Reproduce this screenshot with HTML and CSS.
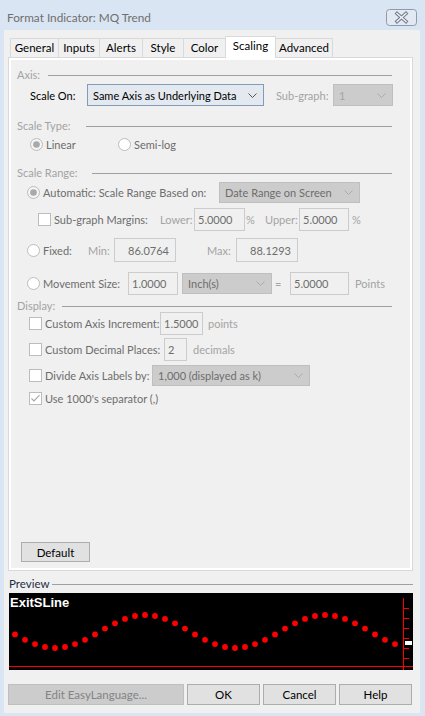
FILE: index.html
```html
<!DOCTYPE html>
<html>
<head>
<meta charset="utf-8">
<title>Format Indicator: MQ Trend</title>
<link rel="stylesheet" href="styles.css">
</head>
<body>
<div class="window">
  <div class="titlebar">
    <span class="title">Format Indicator: MQ Trend</span>
    <svg class="close" width="31" height="17" viewBox="0 0 31 17">
      <rect x="0.5" y="0.5" width="30" height="16" rx="3" fill="#e2e9f3" stroke="#8e99ab"/>
      <path d="M11 4.5 L20 12.5 M20 4.5 L11 12.5" stroke="#6f7b8d" stroke-width="3.4" stroke-linecap="square"/>
      <path d="M11 4.5 L20 12.5 M20 4.5 L11 12.5" stroke="#f4f6f9" stroke-width="1.4" stroke-linecap="square"/>
    </svg>
  </div>
  <div class="client">
    <div class="tabs">
      <div class="tab w49">General</div>
      <div class="tab w42">Inputs</div>
      <div class="tab w44">Alerts</div>
      <div class="tab w42">Style</div>
      <div class="tab w43">Color</div>
      <div class="tab active w51">Scaling</div>
      <div class="tab w58">Advanced</div>
    </div>
    <div class="panel">
      <div class="page">
        <div class="row hdr"><span class="hlabel w31">Axis:</span><span class="hline"></span></div>

        <div class="row h22 mt3">
          <span class="lbl blk ml13 w57">Scale On:</span>
          <div class="combo focus w177 h22"><span>Same Axis as Underlying Data</span><svg class="chev" width="9" height="5" viewBox="0 0 9 5"><path d="M0.5 0.5 L4.5 4.5 L8.5 0.5" fill="none" stroke="#555"/></svg></div>
          <span class="lbl lt ml12 w57">Sub-graph:</span>
          <div class="combo dis w60 h22"><span class="lt">1</span><svg class="chev" width="9" height="5" viewBox="0 0 9 5"><path d="M0.5 0.5 L4.5 4.5 L8.5 0.5" fill="none" stroke="#ababab"/></svg></div>
        </div>

        <div class="row hdr mt12"><span class="hlabel w69">Scale Type:</span><span class="hline"></span></div>

        <div class="row h14 mt5">
          <div class="opt ml13 w88">
            <svg class="rb" width="13" height="13" viewBox="0 0 13 13"><circle cx="6.5" cy="6.5" r="6" fill="#f4f4f4" stroke="#bcbcbc"/><circle cx="6.5" cy="6.5" r="3.3" fill="#a9a9a9"/></svg>
            <span class="mid">Linear</span>
          </div>
          <div class="opt">
            <svg class="rb" width="13" height="13" viewBox="0 0 13 13"><circle cx="6.5" cy="6.5" r="6" fill="#fff" stroke="#bcbcbc"/></svg>
            <span class="mid">Semi-log</span>
          </div>
        </div>

        <div class="row hdr mt14"><span class="hlabel w75">Scale Range:</span><span class="hline"></span></div>

        <div class="row h21 mt3">
          <div class="opt ml10 w192">
            <svg class="rb" width="13" height="13" viewBox="0 0 13 13"><circle cx="6.5" cy="6.5" r="6" fill="#f4f4f4" stroke="#bcbcbc"/><circle cx="6.5" cy="6.5" r="3.3" fill="#a9a9a9"/></svg>
            <span class="mid">Automatic: Scale Range Based on:</span>
          </div>
          <div class="combo dis w141 h21"><span>Date Range on Screen</span><svg class="chev" width="9" height="5" viewBox="0 0 9 5"><path d="M0.5 0.5 L4.5 4.5 L8.5 0.5" fill="none" stroke="#ababab"/></svg></div>
        </div>

        <div class="row h24 mt4">
          <div class="opt ml21 w122">
            <svg class="cb" width="13" height="13" viewBox="0 0 13 13"><rect x="0.5" y="0.5" width="12" height="12" fill="#fff" stroke="#bcbcbc"/></svg>
            <span class="mid">Sub-graph Margins:</span>
          </div>
          <span class="lbl lt w34">Lower:</span>
          <div class="edit w51 h23">5.0000</div>
          <span class="lbl lt pl1 w20">%</span>
          <span class="lbl lt w34">Upper:</span>
          <div class="edit w50 h23">5.0000</div>
          <span class="lbl lt pl3">%</span>
        </div>

        <div class="row h24 mt7">
          <div class="opt ml10 w61">
            <svg class="rb" width="13" height="13" viewBox="0 0 13 13"><circle cx="6.5" cy="6.5" r="6" fill="#fff" stroke="#bcbcbc"/></svg>
            <span class="mid">Fixed:</span>
          </div>
          <span class="lbl lt w26">Min:</span>
          <div class="edit right w62 h24">86.0764</div>
          <span class="lbl lt ml31 w29">Max:</span>
          <div class="edit right w62 h24">88.1293</div>
        </div>

        <div class="row h24 mt9">
          <div class="opt ml10 w101">
            <svg class="rb" width="13" height="13" viewBox="0 0 13 13"><circle cx="6.5" cy="6.5" r="6" fill="#fff" stroke="#bcbcbc"/></svg>
            <span class="mid">Movement Size:</span>
          </div>
          <div class="edit w50 h23">1.0000</div>
          <div class="combo dis ml4 w90 h21"><span>Inch(s)</span><svg class="chev" width="9" height="5" viewBox="0 0 9 5"><path d="M0.5 0.5 L4.5 4.5 L8.5 0.5" fill="none" stroke="#ababab"/></svg></div>
          <span class="lbl lt ml3 w15">=</span>
          <div class="edit w59 h23">5.0000</div>
          <span class="lbl lt ml6">Points</span>
        </div>

        <div class="row hdr mt3"><span class="hlabel w45">Display:</span><span class="hline"></span></div>

        <div class="row h23">
          <div class="opt ml12 w131">
            <svg class="cb" width="13" height="13" viewBox="0 0 13 13"><rect x="0.5" y="0.5" width="12" height="12" fill="#fff" stroke="#bcbcbc"/></svg>
            <span class="mid">Custom Axis Increment:</span>
          </div>
          <div class="edit w43 h23">1.5000</div>
          <span class="lbl lt ml5">points</span>
        </div>

        <div class="row h23 mt3">
          <div class="opt ml12 w135">
            <svg class="cb" width="13" height="13" viewBox="0 0 13 13"><rect x="0.5" y="0.5" width="12" height="12" fill="#fff" stroke="#bcbcbc"/></svg>
            <span class="mid">Custom Decimal Places:</span>
          </div>
          <div class="edit w23 h23">2</div>
          <span class="lbl lt ml6">decimals</span>
        </div>

        <div class="row h21 mt4">
          <div class="opt ml12 w123">
            <svg class="cb" width="13" height="13" viewBox="0 0 13 13"><rect x="0.5" y="0.5" width="12" height="12" fill="#fff" stroke="#bcbcbc"/></svg>
            <span class="mid">Divide Axis Labels by:</span>
          </div>
          <div class="combo dis w158 h21"><span>1,000 (displayed as k)</span><svg class="chev" width="9" height="5" viewBox="0 0 9 5"><path d="M0.5 0.5 L4.5 4.5 L8.5 0.5" fill="none" stroke="#ababab"/></svg></div>
        </div>

        <div class="row h14 mt5">
          <div class="opt ml12">
            <svg class="cb" width="13" height="13" viewBox="0 0 13 13"><rect x="0.5" y="0.5" width="12" height="12" fill="#fff" stroke="#bcbcbc"/><path d="M2.5 6.5 L5 9 L10.5 3.2" fill="none" stroke="#a6a6a6" stroke-width="1.1"/></svg>
            <span class="mid">Use 1000's separator (,)</span>
          </div>
        </div>

        <div class="row mt137">
          <div class="btn ml4 w69 h20">Default</div>
        </div>
      </div>
    </div>

    <div class="prevhead"><span class="prevlabel">Preview</span><span class="hline"></span></div>
    <div class="preview">
      <svg width="404" height="77" viewBox="0 0 404 77">
        <rect x="0" y="0" width="404" height="77" fill="#000"/>
        <text x="1" y="13.5" class="plabel">ExitSLine</text>
        <g fill="#ff0000">
          <circle cx="6" cy="41.4" r="2.9"/><circle cx="16" cy="46.8" r="2.9"/><circle cx="26" cy="51.1" r="2.9"/><circle cx="36" cy="54" r="2.9"/><circle cx="46" cy="55" r="2.9"/><circle cx="56" cy="54" r="2.9"/><circle cx="66" cy="51.1" r="2.9"/><circle cx="76" cy="46.8" r="2.9"/><circle cx="86" cy="41.4" r="2.9"/><circle cx="96" cy="35.6" r="2.9"/><circle cx="106" cy="30.3" r="2.9"/><circle cx="116" cy="25.9" r="2.9"/><circle cx="126" cy="23" r="2.9"/><circle cx="136" cy="22" r="2.9"/><circle cx="146" cy="23" r="2.9"/><circle cx="156" cy="25.9" r="2.9"/><circle cx="166" cy="30.3" r="2.9"/><circle cx="176" cy="35.6" r="2.9"/><circle cx="186" cy="41.4" r="2.9"/><circle cx="196" cy="46.8" r="2.9"/><circle cx="206" cy="51.1" r="2.9"/><circle cx="216" cy="54" r="2.9"/><circle cx="226" cy="55" r="2.9"/><circle cx="236" cy="54" r="2.9"/><circle cx="246" cy="51.1" r="2.9"/><circle cx="256" cy="46.8" r="2.9"/><circle cx="266" cy="41.4" r="2.9"/><circle cx="276" cy="35.6" r="2.9"/><circle cx="286" cy="30.3" r="2.9"/><circle cx="296" cy="25.9" r="2.9"/><circle cx="306" cy="23" r="2.9"/><circle cx="316" cy="22" r="2.9"/><circle cx="326" cy="23" r="2.9"/><circle cx="336" cy="25.9" r="2.9"/><circle cx="346" cy="30.3" r="2.9"/><circle cx="356" cy="35.6" r="2.9"/><circle cx="366" cy="41.4" r="2.9"/><circle cx="376" cy="46.8" r="2.9"/><circle cx="386" cy="51.1" r="2.9"/>
        </g>
        <g stroke="#ff0000" stroke-width="1" fill="none">
          <path d="M0 73.5 H404"/>
          <path d="M394.5 5 V77"/>
          <path d="M394.5 15.5 H400 M394.5 25.5 H400 M394.5 35.5 H400 M394.5 45.5 H400 M394.5 55.5 H400 M394.5 65.5 H400"/>
        </g>
        <rect x="396" y="48" width="7" height="4" fill="#fff"/>
      </svg>
    </div>

    <div class="buttons">
      <div class="btn disabled w176 h21">Edit EasyLanguage...</div>
      <div class="btn w73 h21">OK</div>
      <div class="btn w73 h21">Cancel</div>
      <div class="btn w73 h21">Help</div>
    </div>
  </div>
</div>
</body>
</html>
```

FILE: styles.css
```css
* { box-sizing: border-box; }
html, body { margin: 0; padding: 0; }
body {
  width: 425px;
  height: 716px;
  overflow: hidden;
  background: #dae5f3;
  font-family: "Lato", "Noto Sans", sans-serif;
  font-size: 11px;
  color: #000;
}
.window {
  width: 425px;
  height: 716px;
  display: flex;
  flex-direction: column;
  background: #dae5f3;
}
.titlebar {
  height: 30px;
  flex: none;
  display: flex;
  align-items: center;
  justify-content: space-between;
  padding: 4px 8px 0 7px;
}
.title { color: #6f6f6f; font-size: 11.8px; }
.close { display: block; }

.client {
  flex: 1;
  margin: 0 5px 3px 4px;
  background: #f0f0f0;
  display: flex;
  flex-direction: column;
}

/* tabs */
.tabs {
  height: 27px;
  flex: none;
  display: flex;
  align-items: flex-end;
  padding-left: 6px;
}
.tab {
  height: 19px;
  border: 1px solid #d9d9d9;
  border-bottom: none;
  background: #f0f0f0;
  margin-left: -1px;
  text-align: center;
  line-height: 17px;
  color: #000;
  font-size: 11.5px;
}
.tab:first-child { margin-left: 0; }
.tab.active {
  height: 22px;
  margin-bottom: -1px;
  background: #fff;
  line-height: 18px;
  position: relative;
  z-index: 1;
}

/* panel */
.panel {
  flex: none;
  margin-left: 4px;
  width: 405px;
  height: 514px;
  border: 1px solid #d9d9d9;
  background: #fff;
  padding: 2px;
}
.page {
  height: 100%;
  background: #f0f0f0;
  padding: 7px 0 0 6px;
}
.row {
  width: 375px;
  display: flex;
  align-items: center;
  flex: none;
}
.hdr { height: 14px; color: #a3a3a3; }
.hlabel { flex: none; }
.hline { flex: 1; height: 1px; background: #a0a0a0; margin-top: 2px; }

.lbl { flex: none; white-space: nowrap; }
.blk { color: #000; }
.lt { color: #a3a3a3; }
.mid { color: #6d6d6d; white-space: nowrap; }

.opt { display: flex; align-items: center; gap: 3px; flex: none; }
.rb, .cb { display: block; flex: none; }

.combo {
  flex: none;
  display: flex;
  align-items: center;
  justify-content: space-between;
  padding: 0 6px 0 5px;
  border: 1px solid #adadad;
  background: #e1e1e1;
  white-space: nowrap;
  overflow: hidden;
}
.combo.focus { border-color: #7f9dbb; background: #e4e9ef; color: #000; }
.combo.dis { border-color: #bfbfbf; background: #cccccc; color: #6d6d6d; }
.chev { display: block; flex: none; }

.edit {
  flex: none;
  display: flex;
  align-items: center;
  padding-left: 3px;
  border: 1px solid #cccccc;
  background: #f0f0f0;
  color: #6d6d6d;
}
.edit.right { justify-content: flex-end; padding-left: 0; padding-right: 6px; }

.btn {
  flex: none;
  display: flex;
  align-items: center;
  justify-content: center;
  border: 1px solid #adadad;
  background: #e1e1e1;
  color: #000;
  font-size: 11.5px;
}
.btn.disabled { border-color: #bfbfbf; background: #cccccc; color: #838383; }

/* preview */
.prevhead {
  flex: none;
  margin: 5px 0 0 5px;
  width: 404px;
  height: 14px;
  display: flex;
  align-items: center;
}
.prevlabel { color: #1f2d44; margin-right: 3px; font-size: 11.5px; }
.preview {
  flex: none;
  margin: 3px 0 0 5px;
  width: 404px;
  height: 77px;
}
.preview svg { display: block; }
.plabel {
  fill: #fff;
  font-family: "Liberation Sans", Arial, sans-serif;
  font-weight: bold;
  font-size: 13px;
}
.buttons {
  flex: none;
  margin: 14px 0 0 4px;
  display: flex;
  gap: 3px;
}

/* sizes */
.h14 { height: 14px; }
.h20 { height: 20px; }
.h21 { height: 21px; }
.h22 { height: 22px; }
.h23 { height: 23px; }
.h24 { height: 24px; }

.w15 { width: 15px; } .w20 { width: 20px; } .w23 { width: 23px; } .w26 { width: 26px; }
.w29 { width: 29px; } .w31 { width: 31px; } .w34 { width: 34px; } .w42 { width: 42px; }
.w43 { width: 43px; } .w44 { width: 44px; } .w45 { width: 45px; } .w49 { width: 49px; }
.w50 { width: 50px; } .w51 { width: 51px; } .w57 { width: 57px; } .w58 { width: 58px; }
.w59 { width: 59px; } .w60 { width: 60px; } .w61 { width: 61px; } .w62 { width: 62px; }
.w69 { width: 69px; } .w73 { width: 73px; } .w75 { width: 75px; } .w88 { width: 88px; }
.w90 { width: 90px; } .w101 { width: 101px; } .w122 { width: 122px; } .w123 { width: 123px; }
.w131 { width: 131px; } .w135 { width: 135px; } .w141 { width: 141px; } .w158 { width: 158px; }
.w176 { width: 176px; } .w177 { width: 177px; } .w192 { width: 192px; }

.ml3 { margin-left: 3px; } .ml4 { margin-left: 4px; } .ml5 { margin-left: 5px; }
.ml6 { margin-left: 6px; } .ml10 { margin-left: 10px; } .ml12 { margin-left: 12px; }
.ml13 { margin-left: 13px; } .ml21 { margin-left: 21px; } .ml31 { margin-left: 31px; }
.pl1 { padding-left: 1px; } .pl3 { padding-left: 3px; }

.mt3 { margin-top: 3px; } .mt4 { margin-top: 4px; } .mt5 { margin-top: 5px; }
.mt7 { margin-top: 7px; } .mt9 { margin-top: 9px; } .mt12 { margin-top: 12px; }
.mt14 { margin-top: 14px; } .mt137 { margin-top: 137px; }
```
